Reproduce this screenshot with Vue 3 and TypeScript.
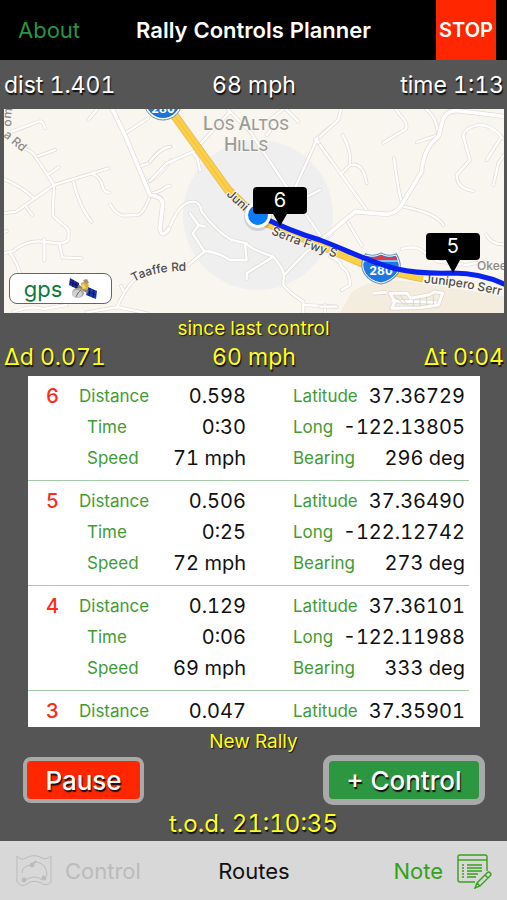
<script setup lang="ts">
interface Reading {
  label: string
  value: string
}

interface ControlPoint {
  id: number
  leg: Reading[]
  position: Reading[]
}

interface MapTile {
  x: number
  roads: string[]
}

const controls: ControlPoint[] = [
  {
    id: 6,
    leg: [
      { label: 'Distance', value: '0.598' },
      { label: 'Time', value: '0:30' },
      { label: 'Speed', value: '71 mph' },
    ],
    position: [
      { label: 'Latitude', value: '37.36729' },
      { label: 'Long', value: '-122.13805' },
      { label: 'Bearing', value: '296 deg' },
    ],
  },
  {
    id: 5,
    leg: [
      { label: 'Distance', value: '0.506' },
      { label: 'Time', value: '0:25' },
      { label: 'Speed', value: '72 mph' },
    ],
    position: [
      { label: 'Latitude', value: '37.36490' },
      { label: 'Long', value: '-122.12742' },
      { label: 'Bearing', value: '273 deg' },
    ],
  },
  {
    id: 4,
    leg: [
      { label: 'Distance', value: '0.129' },
      { label: 'Time', value: '0:06' },
      { label: 'Speed', value: '69 mph' },
    ],
    position: [
      { label: 'Latitude', value: '37.36101' },
      { label: 'Long', value: '-122.11988' },
      { label: 'Bearing', value: '333 deg' },
    ],
  },
  {
    id: 3,
    leg: [{ label: 'Distance', value: '0.047' }],
    position: [{ label: 'Latitude', value: '37.35901' }],
  },
]

// Local streets, drawn at three units per map pixel in tiles placed side by side.
const tiles: MapTile[] = [
  {
    x: 0,
    roads: [
      'M75 132 Q95 138 104 152 L162 240',
      'M115 153 L165 135',
      'M0 326 L48 320 L162 240 L325 190',
      'M100 278 Q60 240 0 218',
      'M78 305 L97 330',
      'M145 208 L177 187',
      'M162 240 L158 330 Q165 340 190 360 Q206 370 206 382 L205 405 Q190 417 175 415 L130 410 Q80 405 40 438 L0 447',
      'M178 415 L187 457 L245 460',
      'M133 402 L133 467',
      'M30 445 Q50 470 60 505',
      'M220 230 Q240 310 275 350',
      'M278 207 Q300 215 308 245 Q312 262 328 263',
      'M330 298 Q350 330 370 332 L415 330 Q435 320 450 272',
      'M330 0 L375 90 L450 270',
      'M372 87 L445 40',
      'M418 185 L445 175 Q480 128 512 125',
      'M440 232 Q475 220 512 165',
      'M265 45 L295 8',
      'M35 80 L115 50 Q130 45 135 70',
      'M402 525 Q370 560 350 610',
      'M260 622 L330 610 L352 606 L440 625',
      'M363 543 L372 560',
      'M40 620 Q100 600 130 612 L200 600',
      'M0 385 L20 378',
    ],
  },
  {
    x: 150,
    roads: [
      'M0 228 L50 175 L130 140 L240 20',
      'M0 268 Q20 262 35 255 Q50 242 60 243',
      'M0 272 Q40 266 38 300 L32 370 Q40 405 62 360 Q90 290 130 290 Q150 290 155 320 Q200 380 245 405 L290 415 Q300 432 370 455 Q400 490 402 510 L400 540 Q420 565 460 590 L460 630',
      'M0 170 Q30 130 60 125',
      'M130 145 L142 160 L150 195',
      'M285 415 L290 465 L240 465 Q200 440 165 438 L115 480',
      'M120 325 L145 360 L165 365',
      'M145 362 L128 385 L160 435',
      'M370 455 L290 505 L290 522',
      'M402 510 L470 440 L545 388',
      'M460 600 L560 605',
      'M525 600 L525 630',
      'M235 15 L300 80 L400 230 L510 390',
      'M500 105 L430 260',
      'M495 105 L545 62',
      'M500 105 L545 170',
      'M460 280 L510 255',
      'M395 0 L445 50',
      'M350 90 L375 60 L360 45 L400 12',
    ],
  },
  {
    x: 320,
    roads: [
      'M0 120 L140 315',
      'M250 305 Q350 325 370 360',
      'M245 290 Q235 260 222 160',
      'M80 345 L125 422',
      'M65 205 L90 180 Q130 170 140 235',
      'M90 175 Q95 140 68 90',
      'M225 8 L240 30 Q265 55 258 72 L190 113',
      'M355 90 L290 112',
      'M355 90 Q350 35 318 12',
      'M0 95 L55 45 L65 5',
      'M548 100 Q520 60 475 60 Q430 70 430 95 L450 165 L410 210 Q410 250 460 258',
      'M545 95 L500 165',
      'M552 150 L535 175 L520 240',
      'M498 388 Q515 420 555 418',
      'M245 432 Q290 420 310 440 L355 470 L440 480 L490 470',
      'M30 455 Q60 465 65 485 Q90 500 90 540 L65 555',
      'M0 605 L50 605',
    ],
  },
]

const mainRoad =
  'M-20 425 L105 320 L200 328 Q230 325 245 300 L305 200 Q310 130 355 95 L370 40 Q385 12 420 18 L560 35'
</script>

<template>
  <div class="app">
    <header class="navbar">
      <a class="about" href="#about">About</a>
      <h1>Rally Controls Planner</h1>
      <button class="stop" type="button">STOP</button>
    </header>

    <main class="content">
      <div class="stats">
        <span>dist 1.401</span>
        <span>68 mph</span>
        <span>time 1:13</span>
      </div>

      <section class="map" aria-label="Map">
        <svg class="map-art" viewBox="4 109 500 204" preserveAspectRatio="xMidYMid slice">
          <defs>
            <path id="label-fwy-a" d="M226 195 L250 217" />
            <path id="label-fwy-b" d="M271 234 Q300 247 350 262" />
            <path id="label-fwy-c" d="M424 283 Q460 285 520 300" />
            <path id="label-taaffe" d="M134 282 Q154 270 194 271" />
            <path id="label-rd" d="M3 136 L28 157" />
            <path id="label-edge" d="M12 126 Q9 118 15 100" />
          </defs>
          <rect x="0" y="105" width="510" height="212" fill="#f9f6ef" />
          <path d="M340 313 L352 292 Q372 277 405 281 L504 296 V313Z" fill="#f3ecdf" />
          <circle cx="258" cy="215" r="75" fill="#eeefee" />

          <g v-for="tile in tiles" :key="tile.x" :transform="`translate(${tile.x} 105) scale(0.33333)`">
            <path v-for="road in tile.roads" :key="road" class="casing" :d="road" />
            <path v-for="road in tile.roads" :key="`${road}-fill`" class="street" :d="road" />
          </g>
          <g transform="translate(0 105) scale(0.33333)">
            <path class="casing wide" d="M335 8 L375 90 L450 270 Q490 275 488 300 L480 370 Q485 402 506 372" />
            <path class="street wide" d="M335 8 L375 90 L450 270 Q490 275 488 300 L480 370 Q485 402 506 372" />
          </g>
          <g transform="translate(320 105) scale(0.33333)">
            <path class="casing wide" :d="mainRoad" />
            <path class="street wide" :d="mainRoad" />
            <g fill="none" stroke="#d9d3c8" stroke-width="13" stroke-linejoin="round">
              <path d="M160 565 L200 562 M210 565 L262 565 L272 580 L325 570 L345 560 L368 565 L355 600 L300 608 L215 610 L225 590Z" />
              <path d="M215 588 L350 592" />
            </g>
            <g fill="none" stroke="#fff" stroke-width="9" stroke-linejoin="round">
              <path d="M160 565 L200 562 M210 565 L262 565 L272 580 L325 570 L345 560 L368 565 L355 600 L300 608 L215 610 L225 590Z" />
              <path d="M215 588 L350 592" />
            </g>
            <path d="M225 575 L255 600 M240 570 L262 600 M280 585 V605 M300 580 V605 M320 575 V602 M340 570 V600" stroke="#d9d3c8" stroke-width="3" />
          </g>

          <g fill="none">
            <path d="M160 100 L172 112 L228 190 L258 219 L325 247 L372 267 L423 278" stroke="#e9bb61" stroke-width="9" stroke-linejoin="round" />
            <path d="M160 100 L172 112 L228 190 L258 219 L325 247 L372 267 L423 278" stroke="#fbd045" stroke-width="7" stroke-linejoin="round" />
            <path d="M160 100 L172 112 L228 190 L258 219" stroke="#f3c03d" stroke-width="1" />
          </g>

          <g class="place" text-anchor="middle">
            <text x="246" y="130"><tspan font-size="18">L</tspan>OS <tspan font-size="18">A</tspan>LTOS</text>
            <text x="246" y="151"><tspan font-size="18">H</tspan>ILLS</text>
          </g>

          <g class="road-name">
            <text><textPath href="#label-fwy-a">Juni</textPath></text>
            <text><textPath href="#label-fwy-b">Serra Fwy S</textPath></text>
            <text><textPath href="#label-fwy-c">Junipero Serr</textPath></text>
            <text><textPath href="#label-taaffe">Taaffe Rd</textPath></text>
            <text class="minor"><textPath href="#label-rd">a Rd</textPath></text>
            <text class="minor"><textPath href="#label-edge">om</textPath></text>
            <text class="minor" x="477" y="270">Okee</text>
          </g>

          <g>
            <circle cx="163" cy="101" r="18" fill="#1b74d8" stroke="#fff" stroke-width="2" />
            <circle cx="163" cy="101" r="19" fill="none" stroke="#6c87a8" stroke-width="1" />
            <text class="shield" x="163" y="113" text-anchor="middle">280</text>
          </g>
          <g>
            <path d="M366 255 Q374 258 381 254 Q388 258 396 255 Q402 266 397 273 Q391 281 381 283 Q370 281 365 273 Q360 265 366 255Z" fill="#1f78df" stroke="#7193bb" stroke-width="3" />
            <path d="M366 255 Q374 258 381 254 Q388 258 396 255 Q402 266 397 273 Q391 281 381 283 Q370 281 365 273 Q360 265 366 255Z" fill="#1f78df" stroke="#fff" stroke-width="1" />
            <path d="M366 256 Q374 259 381 255 Q388 259 396 256 L397 260 H365Z" fill="#d63d4d" />
            <path d="M364 261 H398" stroke="#fff" stroke-width="1" />
            <text class="shield" x="381" y="275" text-anchor="middle">280</text>
          </g>

          <path d="M262 217 Q290 231 320 240 C345 249 368 262 397 269 Q418 274 453 273 Q484 273 510 287" fill="none" stroke="#0a22f0" stroke-width="5" />
          <circle cx="258" cy="217" r="14" fill="#000" opacity="0.12" />
          <circle cx="258" cy="215" r="13" fill="#fff" />
          <circle cx="258" cy="215" r="10" fill="#0a7cf5" />

          <g class="pin">
            <path d="M257 187 H303 Q307 187 307 191 V210 Q307 214 303 214 H287 L280 226 L273 214 H257 Q253 214 253 210 V191 Q253 187 257 187Z" />
            <text x="280" y="207" text-anchor="middle">6</text>
            <path d="M430 233 H476 Q480 233 480 237 V256 Q480 260 476 260 H460 L453 273 L446 260 H430 Q426 260 426 256 V237 Q426 233 430 233Z" />
            <text x="453" y="253" text-anchor="middle">5</text>
          </g>
        </svg>

        <button class="gps" type="button">
          gps
          <svg class="satellite" viewBox="0 0 28 24" aria-hidden="true">
            <path d="M1 1 L10 6 L10 13 L0 8Z" fill="#1c2f9e" />
            <path d="M19 10 L28 14 L27 22 L17 18Z" fill="#173bb0" />
            <path d="M4 3 V10 M7 5 V12 M1 5 L10 9 M21 11 L20 19 M25 13 L24 21 M18 14 L27 18" stroke="#07145c" stroke-width="1" />
            <path d="M9 9 L19 15" stroke="#8b8271" stroke-width="3" />
            <path d="M12 6 L16 4 L20 8 L18 13 L13 12Z" fill="#dfae36" />
            <path d="M14 3 L18 2 L20 6 L17 7Z" fill="#9b9182" />
            <path d="M12 8 L15 7 L17 11 L14 12Z" fill="#f3d36c" />
            <ellipse cx="9" cy="16" rx="6" ry="5" fill="#a8a8a8" />
            <ellipse cx="8" cy="17" rx="5" ry="4" fill="#d0d0d0" />
            <path d="M8 17 L12 13 M7 20 L9 16" stroke="#777" stroke-width="1" />
          </svg>
        </button>
      </section>

      <p class="caption">since last control</p>
      <div class="stats since">
        <span>Δd 0.071</span>
        <span>60 mph</span>
        <span>Δt 0:04</span>
      </div>

      <ul class="controls">
        <li v-for="control in controls" :key="control.id" class="control">
          <strong class="number">{{ control.id }}</strong>
          <dl class="readings leg">
            <div v-for="reading in control.leg" :key="reading.label">
              <dt>{{ reading.label }}</dt>
              <dd>{{ reading.value }}</dd>
            </div>
          </dl>
          <dl class="readings">
            <div v-for="reading in control.position" :key="reading.label">
              <dt>{{ reading.label }}</dt>
              <dd>{{ reading.value }}</dd>
            </div>
          </dl>
        </li>
      </ul>

      <p class="caption rally">New Rally</p>
      <div class="actions">
        <button class="action pause" type="button">Pause</button>
        <button class="action add" type="button">+ Control</button>
      </div>
      <p class="clock">t.o.d. 21:10:35</p>
    </main>

    <footer class="toolbar">
      <button class="tool" type="button" disabled>
        <svg class="map-icon" viewBox="0 0 36 34" fill="none" stroke="currentColor" stroke-width="1" aria-hidden="true">
          <path d="M1 2 Q5 7 10 4 Q17 0 24 3 Q30 7 35 2 V28 Q30 33 25 29 Q17 25 11 30 Q6 34 1 28Z" />
          <path d="M9 26 Q20 20 26 26 M6 19 Q6 12 15 11 M20 8 Q31 9 31 22" />
          <circle cx="16" cy="11" r="2" fill="currentColor" />
          <circle cx="8" cy="26" r="2" fill="currentColor" />
          <circle cx="28" cy="24" r="2" fill="currentColor" />
          <path d="M16 11 L20 7" stroke-width="2" />
        </svg>
        Control
      </button>
      <button class="tool routes" type="button">Routes</button>
      <button class="tool note" type="button">
        Note
        <svg class="note-icon" viewBox="0 0 36 36" fill="none" stroke="currentColor" stroke-width="1.4" aria-hidden="true">
          <path d="M31 18 V4 Q31 2 29 2 H4 Q2 2 2 4 V27 Q2 29 4 29 H19" />
          <path d="M2 7 H31" />
          <path d="M11 12 H26 M11 15 H26 M11 18 H26 M11 21 H22 M11 24 H20" />
          <path d="M6 12 H8 M6 15 H8 M6 18 H8 M6 21 H8 M6 24 H8" />
          <path d="M31 20 Q33 18 34 20 Q36 21 34 23 L24 33 L19 35 L21 30Z M21 30 L24 33 M29 22 L32 25" />
        </svg>
      </button>
    </footer>
  </div>
</template>

<style>
body {
  margin: 0;
  background: #555;
}
</style>

<style scoped>
.app {
  display: flex;
  flex-direction: column;
  height: 100vh;
  background: #555;
  font-family: Inter, 'Liberation Sans', sans-serif;
  font-variant-numeric: tabular-nums;
}

button {
  padding: 0;
  border: 0;
  background: none;
  font: inherit;
  cursor: pointer;
}

p,
ul,
dl,
dd {
  margin: 0;
  padding: 0;
}

.navbar {
  display: grid;
  grid-template-columns: 1fr auto 1fr;
  align-items: center;
  flex: none;
  height: 60px;
  background: #000;
}

.about {
  padding-left: 18px;
  color: #2a9440;
  font-size: 22px;
  text-decoration: none;
}

h1 {
  margin: 0;
  color: #fff;
  font-size: 22px;
  font-weight: 600;
}

.stop {
  justify-self: end;
  align-self: stretch;
  width: 60px;
  margin-right: 11px;
  background: #ff2600;
  color: #fff;
  font-size: 20px;
  font-weight: 600;
}

.content {
  display: flex;
  flex: 1;
  flex-direction: column;
  min-height: 0;
}

.stats {
  display: grid;
  grid-template-columns: 1fr auto 1fr;
  align-items: center;
  flex: none;
  height: 49px;
  padding: 0 3px 0 4px;
  color: #fff;
  font-size: 23px;
  text-shadow: 1px 2px 1px #111;
}

.stats > :last-child {
  text-align: right;
}

.stats.since {
  height: 31px;
  padding-bottom: 4px;
  color: #ffff1a;
}

.map {
  position: relative;
  flex: none;
  height: 204px;
  margin: 0 3px 0 4px;
}

.map-art {
  display: block;
  width: 100%;
  height: 100%;
}

.casing,
.street {
  fill: none;
  stroke-linecap: round;
  stroke-linejoin: round;
}

.casing {
  stroke: #dedbd4;
  stroke-width: 11;
}

.street {
  stroke: #fff;
  stroke-width: 7;
}

.casing.wide {
  stroke-width: 15;
}

.street.wide {
  stroke-width: 11;
}

.place {
  fill: #9b9b9b;
  stroke: #f9f6ef;
  stroke-width: 2px;
  paint-order: stroke;
  font-size: 15px;
  font-weight: 500;
}

.road-name {
  fill: #4c4c4c;
  stroke: #f9f6ef;
  stroke-width: 2px;
  paint-order: stroke;
  font-size: 12px;
  font-weight: 500;
}

.road-name .minor {
  fill: #8a8a8a;
}

.shield {
  fill: #fff;
  font-size: 12px;
  font-weight: 700;
}

.pin {
  fill: #000;
}

.pin text {
  fill: #fff;
  font-size: 20px;
}

.gps {
  position: absolute;
  bottom: 9px;
  left: 5px;
  display: flex;
  align-items: center;
  justify-content: center;
  gap: 7px;
  width: 103px;
  height: 31px;
  border: 1px solid #666;
  border-radius: 8px;
  background: #fff;
  color: #0d7a3b;
  font-size: 22px;
  line-height: 24px;
}

.satellite {
  width: 28px;
  height: 24px;
}

.caption {
  flex: none;
  height: 28px;
  color: #ffff1a;
  font-size: 19px;
  line-height: 32px;
  text-align: center;
  text-shadow: 1px 1px 1px #111;
}

.controls {
  flex: 1;
  min-height: 0;
  margin: 0 27px 0 28px;
  overflow: hidden;
  background: #fff;
  list-style: none;
}

.control {
  display: grid;
  grid-template-columns: 31px 194fr 172fr;
  column-gap: 20px;
  margin-right: 11px;
  padding: 5px 4px 6px 0;
  border-bottom: 1px solid #a3cbaa;
  line-height: 31px;
}

.control:last-child {
  padding-bottom: 0;
  border-bottom: 0;
}

.number {
  color: #ff2a1a;
  font-size: 20px;
  font-weight: 500;
  text-align: right;
}

.readings > div {
  display: flex;
  justify-content: space-between;
}

.leg {
  margin-right: 27px;
}

.leg > div:not(:first-child) {
  padding-left: 8px;
}

dt {
  color: #3f9c33;
  font-size: 17px;
}

dd {
  color: #111;
  font-size: 20px;
}

.rally {
  line-height: 30px;
}

.actions {
  display: flex;
  align-items: center;
  justify-content: space-between;
  flex: none;
  height: 50px;
  padding: 0 22px 0 23px;
}

.action {
  box-sizing: border-box;
  height: 46px;
  border: 4px solid #a9a9a9;
  border-radius: 8px;
  color: #fff;
  font-size: 26px;
  font-weight: 500;
  text-shadow: 1px 2px 1px #111;
}

.pause {
  width: 121px;
  background: #ff2600;
}

.add {
  width: 162px;
  height: 50px;
  border-width: 6px;
  border-radius: 10px;
  background: #2d9640;
}

.clock {
  flex: none;
  height: 36px;
  color: #ffff1a;
  font-size: 24px;
  line-height: 38px;
  text-align: center;
  text-shadow: 1px 2px 1px #111;
}

.toolbar {
  display: grid;
  grid-template-columns: 1fr auto 1fr;
  align-items: center;
  flex: none;
  height: 59px;
  padding: 0 15px 0 16px;
  background: #d8d8d8;
}

.tool {
  display: flex;
  align-items: center;
  gap: 13px;
  color: #bbb;
  font-size: 22px;
}

.tool.routes {
  color: #111;
}

.tool.note {
  justify-self: end;
  color: #36a01b;
}

.map-icon {
  width: 36px;
  height: 34px;
}

.note-icon {
  width: 36px;
  height: 36px;
}
</style>
